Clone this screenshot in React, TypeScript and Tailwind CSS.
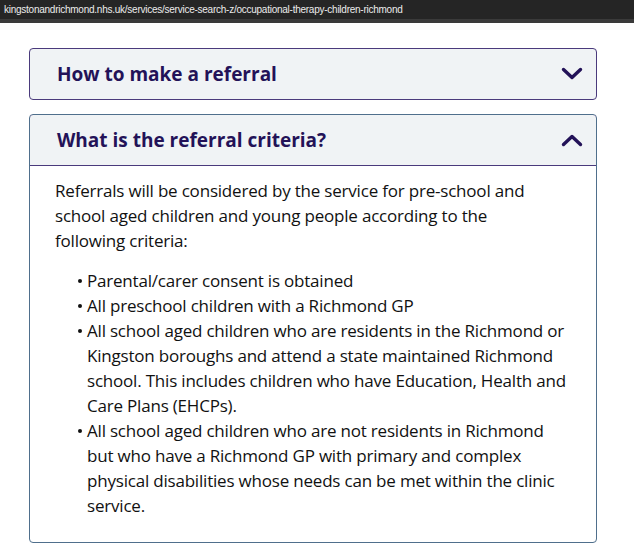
import React from 'react';

const URL = 'kingstonandrichmond.nhs.uk/services/service-search-z/occupational-therapy-children-richmond';

// Lines are broken where the page breaks them
const intro = [
    'Referrals will be considered by the service for pre-school and',
    'school aged children and young people according to the',
    'following criteria:',
];

const criteria = [
    ['Parental/carer consent is obtained'],
    ['All preschool children with a Richmond GP'],
    [
        'All school aged children who are residents in the Richmond or',
        'Kingston boroughs and attend a state maintained Richmond',
        'school. This includes children who have Education, Health and',
        'Care Plans (EHCPs).',
    ],
    [
        'All school aged children who are not residents in Richmond',
        'but who have a Richmond GP with primary and complex',
        'physical disabilities whose needs can be met within the clinic',
        'service.',
    ],
];

const Lines = ({ lines }: { lines: string[] }) => (
    <>
        {lines.map((l, i) => (
            <React.Fragment key={i}>
                {l}
                {i < lines.length - 1 && <br />}
            </React.Fragment>
        ))}
    </>
);

// Chevron drawn as a thick polyline, pointing down or up
const Chevron = ({ up }: { up?: boolean }) => (
    <svg width="22" height="14" viewBox="0 0 22 14" className="shrink-0">
        <path
            d={up ? 'M2.5 11.5L11 3.5L19.5 11.5' : 'M2.5 2.5L11 10.5L19.5 2.5'}
            fill="none"
            stroke="#231258"
            strokeWidth={3.4}
            strokeLinecap="round"
            strokeLinejoin="round"
        />
    </svg>
);

export default function App() {
    return (
        <div className="w-[634px] h-[550px] bg-white overflow-hidden" style={{ fontFamily: '"Open Sans", "Noto Sans", sans-serif' }}>
            {/* Browser address strip */}
            <div className="h-[19px] bg-[#252525] flex items-center pl-[4px]">
                <span
                    className="text-[10px] leading-none text-[#ececec] whitespace-nowrap tracking-[-0.25px]"
                    style={{ fontFamily: '"Liberation Sans", Arial, sans-serif' }}
                >
                    {URL}
                </span>
            </div>
            <div className="h-[4px] bg-[#3a3a3a]" />

            <div className="pl-[29px] pr-[37px] pt-[25px] flex flex-col gap-[14px]">
                {/* Collapsed section */}
                <div className="h-[52px] rounded-[4px] border border-[#4a3a7c] bg-[#f0f3f5] flex items-center justify-between pl-[27px] pr-[13px]">
                    <span className="text-[19px] font-bold text-[#231258]">How to make a referral</span>
                    <Chevron />
                </div>

                {/* Expanded section */}
                <div className="rounded-[4px] border border-[#4f6f8c] overflow-hidden">
                    <div className="h-[52px] bg-[#f0f3f5] border-b border-[#2c1f5e] flex items-center justify-between pl-[27px] pr-[13px] -mx-px -mt-px border-x border-t rounded-t-[4px]" style={{ borderColor: '#4a3a7c' }}>
                        <span className="text-[19px] font-bold text-[#231258]">What is the referral criteria?</span>
                        <Chevron up />
                    </div>
                    <div className="pl-[25px] pr-[20px] pt-[12px] pb-[24px] text-[17px] leading-[25px] tracking-[-0.2px] text-[#111111] whitespace-nowrap">
                        <p>
                            <Lines lines={intro} />
                        </p>
                        <ul className="pl-[32px] mt-[15px]">
                            {criteria.map((item, i) => (
                                <li key={i} className="relative">
                                    <span className="absolute left-[-9px] top-[11px] w-[4px] h-[4px] rounded-full bg-[#111111]" />
                                    <Lines lines={item} />
                                </li>
                            ))}
                        </ul>
                    </div>
                </div>
            </div>
        </div>
    );
}
